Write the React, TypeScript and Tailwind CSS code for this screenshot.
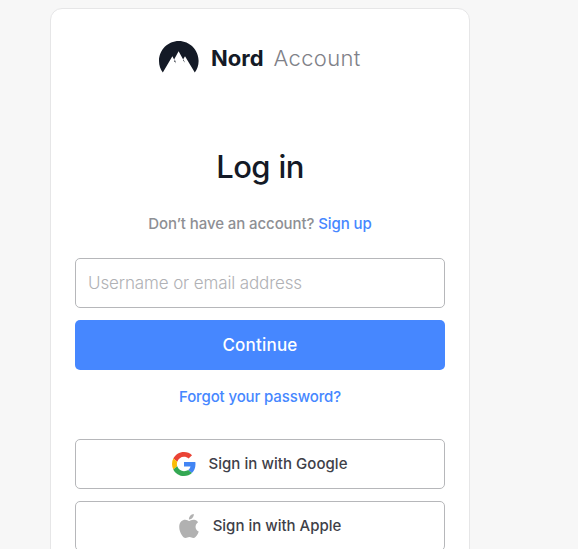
import { useState } from 'react';

const NordLogo = () => (
  <svg className="w-10 h-8" viewBox="0 0 40 32" fill="none" aria-hidden="true">
    <path
      fill="#141a26"
      d="M3.800 31.500C1.400 28.200 0 24.200 0 19.900 0 8.900 8.900 0 19.800 0S39.600 8.900 39.600 19.900c0 4.300-1.400 8.300-3.800 11.600L26 15.200l-1.800 3 1.100 2.200L19.600 10.200l-4.500 8.200-1.700-3.200z"
    />
    <path fill="#141a26" d="M15 17.800l.6 2.100.7-.5.5 3.200-.9-2.200-.7.500zM24.500 18.400l1.500 3.400-1.800-2.300z" />
  </svg>
);

const GoogleIcon = () => (
  <svg className="size-6" viewBox="0 0 48 48" aria-hidden="true">
    <path fill="#EA4335" d="M24 9.500c3.540 0 6.710 1.220 9.210 3.600l6.850-6.850C35.900 2.380 30.470 0 24 0 14.620 0 6.510 5.380 2.560 13.220l7.980 6.190C12.430 13.720 17.740 9.500 24 9.500z" />
    <path fill="#4285F4" d="M46.980 24.550c0-1.570-.15-3.090-.38-4.550H24v9.020h12.940c-.58 2.960-2.260 5.480-4.780 7.180l7.730 6c4.510-4.180 7.090-10.360 7.090-17.650z" />
    <path fill="#FBBC05" d="M10.530 28.590c-.48-1.450-.76-2.990-.76-4.590s.27-3.140.76-4.590l-7.980-6.190C.92 16.460 0 20.120 0 24c0 3.880.92 7.540 2.560 10.780l7.970-6.190z" />
    <path fill="#34A853" d="M24 48c6.480 0 11.930-2.130 15.890-5.810l-7.730-6c-2.150 1.450-4.920 2.300-8.160 2.300-6.260 0-11.570-4.220-13.470-9.910l-7.980 6.190C6.510 42.620 14.620 48 24 48z" />
  </svg>
);

const AppleIcon = () => (
  <svg className="w-5 h-6" viewBox="0 0 814 1000" fill="#b1b1b1" aria-hidden="true">
    <path d="M788.100 340.900c-5.800 4.500-108.200 62.200-108.200 190.500 0 148.400 130.300 200.900 134.200 202.200-.6 3.200-20.700 71.900-68.700 141.900-42.800 61.600-87.500 123.100-155.500 123.100s-85.500-39.500-164-39.500c-76.500 0-103.700 40.800-165.900 40.800s-105.600-57-155.500-127C46.700 790.700 0 663 0 541.800c0-194.400 126.400-297.500 250.800-297.500 66.100 0 121.200 43.400 162.700 43.400 39.500 0 101.100-46 176.300-46 28.500 0 130.900 2.600 198.300 99.200zm-234-181.500c31.100-36.900 53.100-88.100 53.100-139.300 0-7.100-.6-14.300-1.900-20.100-50.600 1.900-110.800 33.700-147.100 75.800-28.500 32.400-55.100 83.600-55.100 135.500 0 7.800 1.300 15.600 1.900 18.100 3.200.6 8.400 1.300 13.600 1.300 45.400 0 102.500-30.400 135.500-71.300z" />
  </svg>
);

export default function App() {
  const [username, setUsername] = useState('');

  return (
    <main className="h-screen overflow-hidden bg-[#f7f7f7] pt-2 pl-[50px] font-['Inter',sans-serif]">
      <div className="flex h-[600px] w-[420px] flex-col rounded-xl border border-[#e6e6e7] bg-white px-6">
        {/* Brand */}
        <div className="mt-8 flex h-8 items-center pl-[84px]">
          <NordLogo />
          <span className="ml-3 pt-0.5 text-[22px] leading-8 font-bold text-[#141a26]">Nord</span>
          <span className="ml-2.5 pt-0.5 text-[22px] leading-8 font-light tracking-[0.33px] text-[#808188]">Account</span>
        </div>

        <h1 className="mt-[74px] mb-px text-center text-[31px] leading-10 font-medium tracking-[-0.6px] text-[#141a26] [word-spacing:1px]">
          Log in
        </h1>

        <p className="mt-6 text-center text-[15px] leading-6 font-medium tracking-[-0.09px] whitespace-nowrap text-[#8e8f94]">
          Don’t have an account?{' '}
          <a href="#" className="text-[#4687ff]">Sign up</a>
        </p>

        <form className="mt-[22px] flex flex-col gap-3" onSubmit={(e) => e.preventDefault()}>
          <input
            type="text"
            value={username}
            onChange={(e) => setUsername(e.target.value)}
            placeholder="Username or email address"
            className="h-[50px] w-full rounded-[5px] border border-[#b6b7ba] px-3 text-[17px] font-light tracking-[-0.12px] text-[#3e4048] outline-none placeholder:text-[#b0b1b5]"
          />
          <button type="submit" className="h-[50px] rounded-[5px] bg-[#4687ff] pt-0.5 text-[17px] font-medium tracking-[0.2px] text-white">
            Continue
          </button>
        </form>

        <a href="#" className="mt-[15px] text-center text-[15px] leading-6 font-medium tracking-[-0.12px] text-[#4687ff]">
          Forgot your password?
        </a>

        {/* Social sign in */}
        <div className="mt-[30px] flex flex-col gap-3 text-[15px] font-medium text-[#3e4048]">
          <button className="flex h-[50px] items-center justify-center gap-3 rounded-[5px] border border-[#b6b7ba]">
            <GoogleIcon />
            <span className="tracking-[0.05px]">Sign in with Google</span>
          </button>
          <button className="flex h-[50px] items-center justify-center gap-3.5 rounded-[5px] border border-[#b6b7ba]">
            <AppleIcon />
            <span>Sign in with Apple</span>
          </button>
        </div>
      </div>
    </main>
  );
}
